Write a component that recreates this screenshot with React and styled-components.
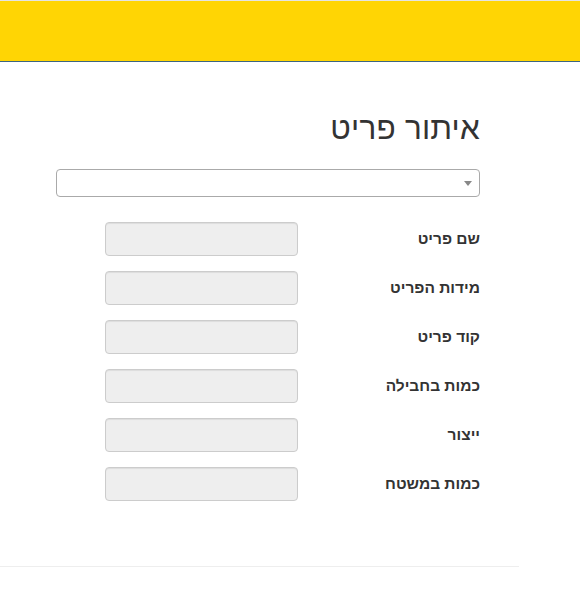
import React from "react";
import styled, { createGlobalStyle } from "styled-components";

const GlobalStyle = createGlobalStyle`
  html, body {
    margin: 0;
    padding: 0;
    background: #fff;
    font-family: "Liberation Sans", Arial, sans-serif;
    color: #333;
  }
`;

const fields = [
  "שם פריט",
  "מידות הפריט",
  "קוד פריט",
  "כמות בחבילה",
  "ייצור",
  "כמות במשטח",
];

const App = () => {
  return (
    <>
      <GlobalStyle />
      <Header />
      <Main dir="rtl">
        <Title>איתור פריט</Title>
        <Select>
          <Arrow />
        </Select>
        <Form>
          {fields.map((label) => (
            <Row key={label}>
              <Label>{label}</Label>
              <Input disabled />
            </Row>
          ))}
        </Form>
      </Main>
      <Rule />
    </>
  );
};

export default App;

const Header = styled.div`
  height: 60px;
  background-color: #ffd504;
  border-top: 1px solid #e4e4e4;
  border-bottom: 1px solid #3d6580;
`;

const Main = styled.div`
  width: 424px;
  margin-left: 56px;
  padding-top: 49px;
  padding-bottom: 65px;
`;

const Title = styled.h1`
  margin: 0 0 24px;
  font-size: 31.5px;
  font-weight: 400;
  line-height: 34px;
  color: #333;
  letter-spacing: 0.2px;
`;

const Select = styled.div`
  position: relative;
  height: 26px;
  border: 1px solid #aaa;
  border-radius: 4px;
  background: #fff;
  margin-bottom: 25px;
`;

const Arrow = styled.span`
  position: absolute;
  right: 7px;
  top: 11px;
  width: 0;
  height: 0;
  border-left: 4px solid transparent;
  border-right: 4px solid transparent;
  border-top: 5px solid #888;
`;

const Form = styled.div`
  display: flex;
  flex-direction: column;
  gap: 15px;
`;

const Row = styled.div`
  display: flex;
  align-items: center;
`;

const Label = styled.label`
  width: 182px;
  font-size: 15.5px;
  font-weight: 700;
  color: #333;
`;

const Input = styled.input`
  box-sizing: border-box;
  width: 193px;
  height: 34px;
  background-color: #eee;
  border: 1px solid #ccc;
  border-radius: 4px;
  box-shadow: inset 0 1px 1px rgba(0, 0, 0, 0.075);
  padding: 6px 12px;
`;

const Rule = styled.hr`
  width: 519px;
  margin: 0;
  border: 0;
  border-top: 1px solid #eee;
`;
